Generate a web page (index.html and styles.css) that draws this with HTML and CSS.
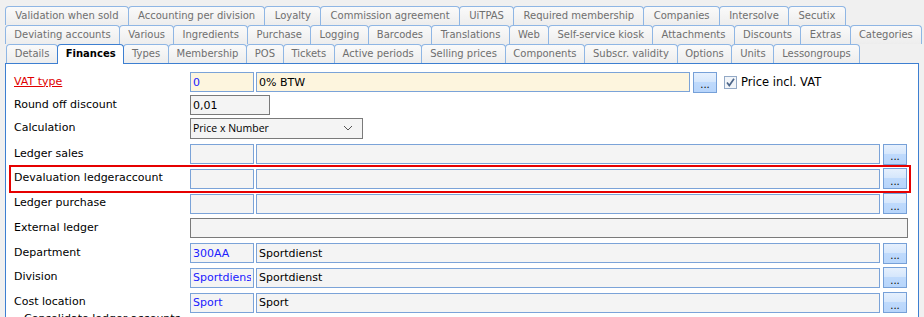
FILE: index.html
```html
<!DOCTYPE html>
<html lang="en">
<head>
  <meta charset="UTF-8">
  <title>Article - Finances</title>
  <link rel="stylesheet" href="styles.css">
</head>
<body>
  <div class="tabs">
    <div class="tabrow first">
      <span class="tab">Validation when sold</span>
      <span class="tab">Accounting per division</span>
      <span class="tab">Loyalty</span>
      <span class="tab">Commission agreement</span>
      <span class="tab">UiTPAS</span>
      <span class="tab">Required membership</span>
      <span class="tab">Companies</span>
      <span class="tab">Intersolve</span>
      <span class="tab">Secutix</span>
    </div>
    <div class="tabrow second">
      <span class="tab">Deviating accounts</span>
      <span class="tab">Various</span>
      <span class="tab">Ingredients</span>
      <span class="tab">Purchase</span>
      <span class="tab">Logging</span>
      <span class="tab">Barcodes</span>
      <span class="tab">Translations</span>
      <span class="tab">Web</span>
      <span class="tab">Self-service kiosk</span>
      <span class="tab">Attachments</span>
      <span class="tab">Discounts</span>
      <span class="tab">Extras</span>
      <span class="tab">Categories</span>
    </div>
    <div class="tabrow last">
      <span class="tab">Details</span>
      <span class="tab active">Finances</span>
      <span class="tab">Types</span>
      <span class="tab">Membership</span>
      <span class="tab">POS</span>
      <span class="tab">Tickets</span>
      <span class="tab">Active periods</span>
      <span class="tab">Selling prices</span>
      <span class="tab">Components</span>
      <span class="tab">Subscr. validity</span>
      <span class="tab">Options</span>
      <span class="tab">Units</span>
      <span class="tab">Lessongroups</span>
    </div>
  </div>

  <div class="panel">
    <div class="group top">
      <div class="row">
        <label class="lbl link">VAT type</label>
        <input class="fld code cream" value="0" readonly>
        <input class="fld vat-desc cream" value="0% BTW" readonly>
        <button class="dots">...</button>
        <span class="check">
          <svg width="13" height="13" viewBox="0 0 13 13"><rect x="0.5" y="0.5" width="12" height="12" fill="#f2f5f9" stroke="#93a9c6"/><polyline points="3,6.5 5.3,9.5 10,2.8" fill="none" stroke="#4d6689" stroke-width="1.7"/></svg>
          Price incl. VAT
        </span>
      </div>
      <div class="row">
        <label class="lbl">Round off discount</label>
        <input class="fld plain short" value="0,01" readonly>
      </div>
      <div class="row">
        <label class="lbl">Calculation</label>
        <div class="combo">
          <span>Price x Number</span>
          <svg width="10" height="6" viewBox="0 0 10 6"><polyline points="1,1 5,5 9,1" fill="none" stroke="#555" stroke-width="1"/></svg>
        </div>
      </div>
    </div>

    <div class="group">
      <div class="row">
        <label class="lbl">Ledger sales</label>
        <input class="fld code" value="" readonly>
        <input class="fld desc" value="" readonly>
        <button class="dots">...</button>
      </div>
      <div class="row marked">
        <label class="lbl">Devaluation ledgeraccount</label>
        <input class="fld code" value="" readonly>
        <input class="fld desc" value="" readonly>
        <button class="dots">...</button>
      </div>
      <div class="row">
        <label class="lbl">Ledger purchase</label>
        <input class="fld code" value="" readonly>
        <input class="fld desc" value="" readonly>
        <button class="dots">...</button>
      </div>
      <div class="row">
        <label class="lbl">External ledger</label>
        <input class="fld plain wide" value="" readonly>
      </div>
      <div class="row">
        <label class="lbl">Department</label>
        <input class="fld code" value="300AA" readonly>
        <input class="fld desc" value="Sportdienst" readonly>
        <button class="dots">...</button>
      </div>
      <div class="row">
        <label class="lbl">Division</label>
        <input class="fld code" value="Sportdienst" readonly>
        <input class="fld desc" value="Sportdienst" readonly>
        <button class="dots">...</button>
      </div>
      <div class="row">
        <label class="lbl">Cost location</label>
        <input class="fld code" value="Sport" readonly>
        <input class="fld desc" value="Sport" readonly>
        <button class="dots">...</button>
      </div>
    </div>
    <div class="sub-option">Consolidate ledger accounts</div>
  </div>
</body>
</html>
```

FILE: styles.css
```css
* { box-sizing: border-box; }
body { margin: 0; background: #f0f0f0; font-family: "DejaVu Sans", Verdana, sans-serif; font-size: 11px; color: #000; height: 317px; overflow: hidden; }

/* tab strip */
.tabs { padding-top: 6px; }
.tabrow { display: flex; height: 19px; padding-left: 5px; }
.tabrow.last { padding-left: 6px; }
.tab { height: 19px; line-height: 18px; padding: 0 7.7px; font-size: 10px; color: #6f6f6f; white-space: nowrap;
  border: 1px solid #8fb6e4; border-bottom: none; border-radius: 4px 4px 0 0;
  background: linear-gradient(#fafafa, #ededed); }
.tabrow.first .tab { padding: 0 9.3px; }
.tabrow.second .tab { padding: 0 8.3px; }
.tab + .tab { margin-left: -1px; }
.tab.active { position: relative; z-index: 1; height: 20px; background: #fff; color: #000; font-weight: bold; border-color: #3d7fd1; }

/* panel */
.panel { background: #fff; border: 1px solid #3d7fd1; margin: 0 5px; height: 300px; padding: 8px 11px 0 7px; }
.group { display: flex; flex-direction: column; gap: 4.8px; }
.group.top { gap: 3px; margin-bottom: 6px; }
.row { display: flex; align-items: center; height: 20px; }
.row.marked { outline: 2px solid #e60000; outline-offset: 2px; }
.lbl { width: 177px; flex: none; padding: 0 0 2px 1px; }
.lbl.link { color: #e00000; text-decoration: underline; }

.fld { height: 20px; border: 1px solid #7ba3d8; background: #f4f4f4; font: 11px "DejaVu Sans", Verdana, sans-serif; padding: 0 2px; color: #000; outline: none; }
.fld.code { width: 64px; color: #2020ff; margin-right: 2px; }
.fld.desc { flex: 1; min-width: 0; margin-right: 3px; }
.fld.vat-desc { width: 434px; margin-right: 3px; }
.fld.cream { background: #fdf5de; }
.fld.plain { border-color: #7a7a7a; }
.fld.short { width: 80px; }
.fld.wide { flex: 1; margin-right: -1px; }

.dots { width: 24px; height: 21px; padding: 6px 0 0; border: 1px solid #76a0d8; font: 10px "DejaVu Sans", sans-serif; line-height: 10px; color: #000;
  background: linear-gradient(#e6f0fd 0, #d6e7fc 45%, #bfdafc 50%, #b7d5fb 100%); }

.check { display: flex; align-items: center; gap: 4px; margin-left: 7px; font-size: 11.5px; }
.check svg { display: block; }

.combo { width: 173px; height: 21px; border: 1px solid #7a7a7a; background: #f4f4f4; display: flex; align-items: center; justify-content: space-between; padding: 0 9px 0 2px; }
.combo span { font: 10.5px "Open Sans", sans-serif; }
.combo svg { display: block; }

.sub-option { margin: -1px 0 0 11px; }
```
